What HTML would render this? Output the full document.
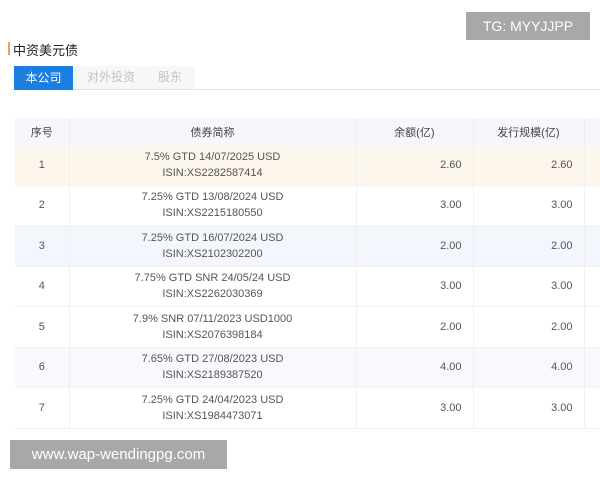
<!DOCTYPE html>
<html><head><meta charset="utf-8"><style>
body{margin:0;width:600px;height:480px;background:#fff;position:relative;overflow:hidden;font-family:"Liberation Sans","Noto Sans CJK SC",sans-serif;color:#333}
.a{position:absolute}
table{position:absolute;left:15px;top:118px;width:585px;border-collapse:collapse;font-size:11px;color:#555;table-layout:fixed}
td{height:39.5px;text-align:center;border-right:1px solid #f0f0f0;border-bottom:1px solid #f2f2f2;padding:0;line-height:16px}
th{height:27px;padding:0;font-weight:normal;background:#f5f7fa;font-size:11px;color:#444;border-right:1px solid #eceef2}
td.n{text-align:right;padding-right:11px}
</style></head><body>
<div class="a" style="left:466px;top:12px;width:124px;height:28px;background:#a8a8a8;color:#fff;font-size:14px;line-height:28px;text-align:center">TG: MYYJJPP</div>
<div class="a" style="left:8px;top:42px;width:2px;height:13px;background:#e0a070"></div>
<div class="a" style="left:13px;top:40px;font-size:13px;color:#222">中资美元债</div>
<div class="a" style="left:14px;top:89px;width:586px;height:1px;background:#dde3ea"></div>
<div class="a" style="left:14px;top:66px;width:59px;height:24px;background:#1a7fe0;color:#fff;font-size:12px;line-height:24px;text-align:center">本公司</div>
<div class="a" style="left:73px;top:66px;width:122px;height:23px;background:#f6f7f9"></div>
<div class="a" style="left:87px;top:66px;font-size:12px;line-height:23px;color:#c4c4c4">对外投资</div>
<div class="a" style="left:158px;top:66px;font-size:12px;line-height:23px;color:#c4c4c4">股东</div>
<table>
<colgroup><col style="width:54px"><col style="width:287px"><col style="width:117px"><col style="width:111px"><col style="width:16px"></colgroup>
<tr><th>序号</th><th>债券简称</th><th style="text-align:right;padding-right:38px">余额(亿)</th><th style="text-align:right;padding-right:24px">发行规模(亿)</th><th></th></tr>
<tr style="background:#fdf6ec"><td>1</td><td>7.5% GTD 14/07/2025 USD<br>ISIN:XS2282587414</td><td class="n">2.60</td><td class="n">2.60</td><td></td></tr>
<tr><td>2</td><td>7.25% GTD 13/08/2024 USD<br>ISIN:XS2215180550</td><td class="n">3.00</td><td class="n">3.00</td><td></td></tr>
<tr style="background:#f3f6fc"><td>3</td><td>7.25% GTD 16/07/2024 USD<br>ISIN:XS2102302200</td><td class="n">2.00</td><td class="n">2.00</td><td></td></tr>
<tr><td>4</td><td>7.75% GTD SNR 24/05/24 USD<br>ISIN:XS2262030369</td><td class="n">3.00</td><td class="n">3.00</td><td></td></tr>
<tr><td>5</td><td>7.9% SNR 07/11/2023 USD1000<br>ISIN:XS2076398184</td><td class="n">2.00</td><td class="n">2.00</td><td></td></tr>
<tr style="background:#f7f9fc"><td>6</td><td>7.65% GTD 27/08/2023 USD<br>ISIN:XS2189387520</td><td class="n">4.00</td><td class="n">4.00</td><td></td></tr>
<tr><td>7</td><td>7.25% GTD 24/04/2023 USD<br>ISIN:XS1984473071</td><td class="n">3.00</td><td class="n">3.00</td><td></td></tr>
</table>
<div class="a" style="left:10px;top:440px;width:217px;height:29px;background:#a8a8a8;color:#fff;font-size:15px;line-height:29px;text-align:center">www.wap-wendingpg.com</div>
</body></html>
